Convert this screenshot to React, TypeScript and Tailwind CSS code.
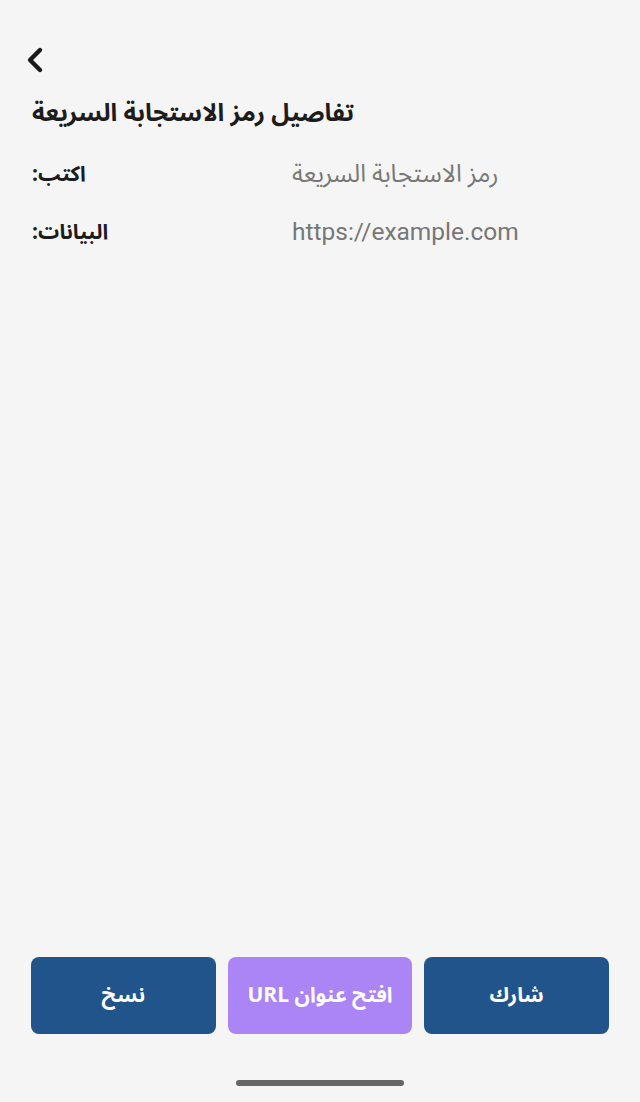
import { ChevronLeft } from 'lucide-react'

function Row({ label, value }: { label: string; value: string }) {
  return (
    <div className="flex items-center h-[58px]">
      <div dir="rtl" className="w-[260px] text-left text-[21px] font-bold text-[#1c1c1c]">
        <span>{label}</span>
      </div>
      <div dir="auto" className="text-[24.5px] text-[#777777] font-['Roboto','Noto_Sans_Arabic','DejaVu_Sans',sans-serif]">
        {value}
      </div>
    </div>
  )
}

export default function App() {
  return (
    <div className="w-[640px] h-[1102px] bg-[#f5f5f5] flex flex-col font-['Noto_Sans_Arabic','DejaVu_Sans',sans-serif]">
      {/* Header */}
      <div className="pt-[40px] pl-[15px]">
        <ChevronLeft size={40} strokeWidth={2.6} className="text-[#1a1a1a]" />
      </div>
      <h1 dir="rtl" className="mt-[15px] px-8 text-left text-[24.5px] font-bold text-[#1c1c1c]">
        <span>تفاصيل رمز الاستجابة السريعة</span>
      </h1>

      <div className="mt-[14px] px-8">
        <Row label="اكتب:" value="رمز الاستجابة السريعة" />
        <Row label="البيانات:" value="https://example.com" />
      </div>

      <div className="flex-1" />

      {/* Actions */}
      <div className="flex gap-3 px-[31px]">
        <button dir="rtl" className="flex-1 h-[77px] rounded-lg bg-[#22548c] text-white text-[21px] font-bold">نسخ</button>
        <button dir="rtl" className="flex-1 h-[77px] rounded-lg bg-[#ab85f5] text-white text-[21px] font-bold">افتح عنوان URL</button>
        <button dir="rtl" className="flex-1 h-[77px] rounded-lg bg-[#22548c] text-white text-[21px] font-bold">شارك</button>
      </div>

      <div className="flex justify-center pt-[46px] pb-[16px]">
        <div className="w-[168px] h-[6px] rounded-full bg-[#666666]" />
      </div>
    </div>
  )
}
